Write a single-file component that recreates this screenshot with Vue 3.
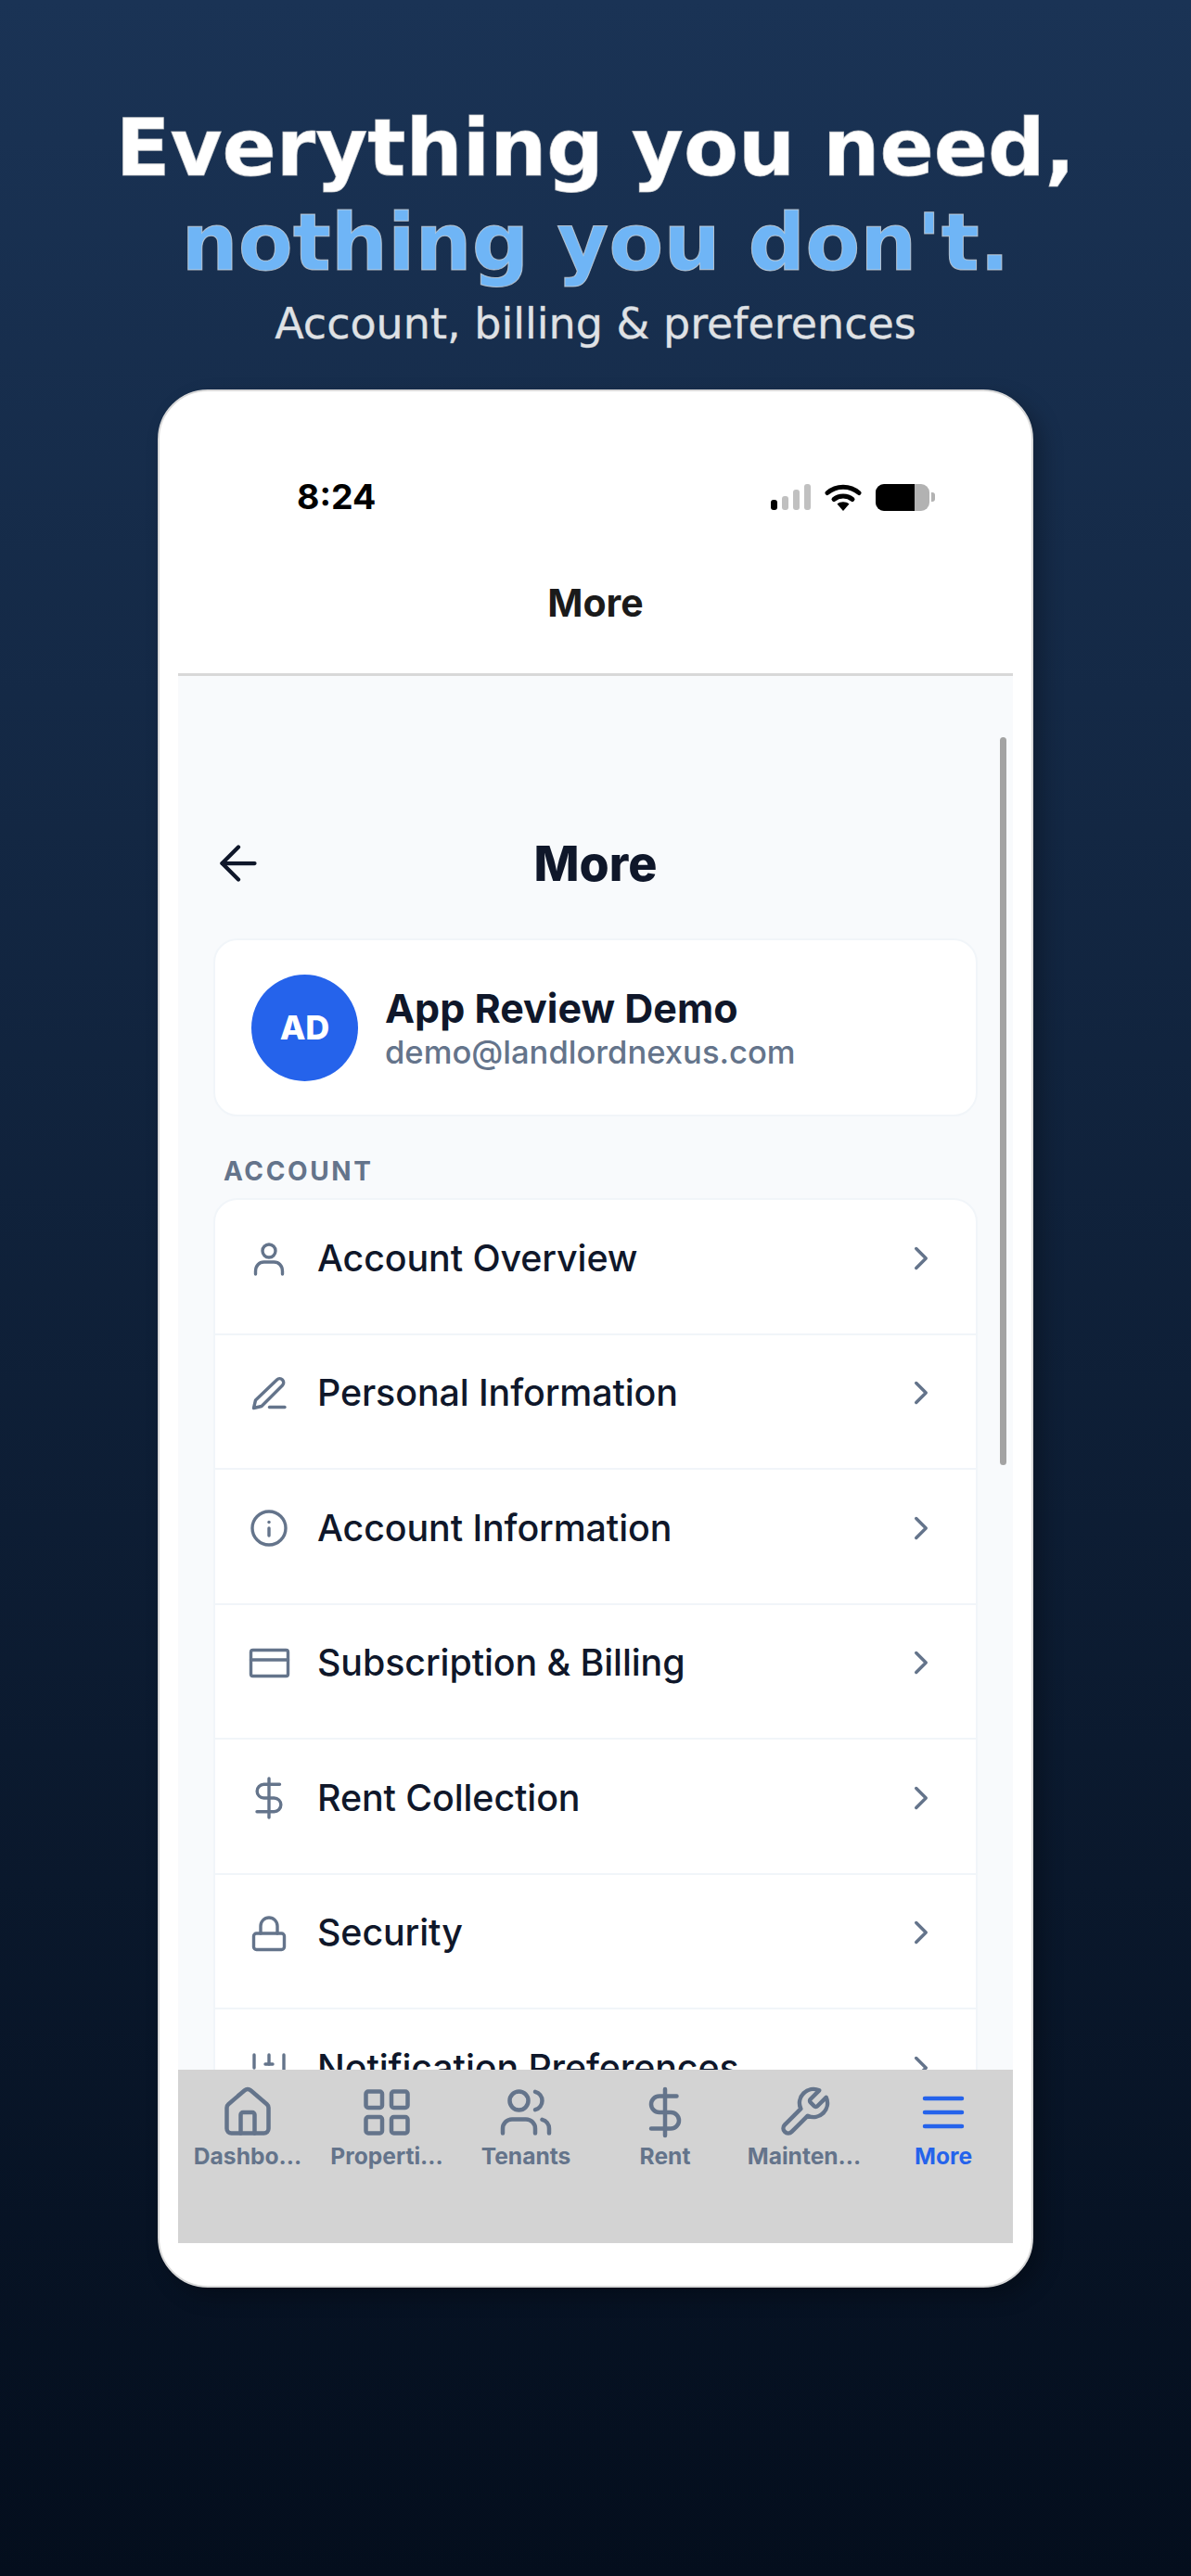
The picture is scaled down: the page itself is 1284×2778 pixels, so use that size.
<template>
  <div class="page">
    <header class="hero">
      <h1>Everything you need,<br /><span>nothing you don't.</span></h1>
      <p>Account, billing &amp; preferences</p>
    </header>

    <div class="phone">
      <div class="status">
        <span class="time">8:24</span>
        <div class="status-icons">
          <div class="signal">
            <i class="on"></i><i class="b2"></i><i class="b3"></i><i class="b4"></i>
          </div>
          <svg class="wifi" width="40" height="30" viewBox="0 0 40 30">
            <path d="M3 10.5C12.5 2 27.5 2 37 10.5" fill="none" stroke="#000" stroke-width="5" stroke-linecap="round" />
            <path d="M10 17.5c5.5-4.6 14.5-4.6 20 0" fill="none" stroke="#000" stroke-width="5" stroke-linecap="round" />
            <path d="M13.5 22.5c3.6-3 9.4-3 13 0L20 30z" fill="#000" />
          </svg>
          <div class="battery"><div class="level"></div></div>
          <div class="cap"></div>
        </div>
      </div>
      <div class="nav-title">More</div>

      <main class="scroll">
        <div class="scrollbar"></div>
        <div class="title-row">
          <svg class="back" width="60" height="60" viewBox="0 0 24 24" fill="none" stroke="#0f172a" stroke-width="1.7" stroke-linecap="round" stroke-linejoin="round">
            <path d="m12 19-7-7 7-7" /><path d="M19 12H5" />
          </svg>
          <h2>More</h2>
        </div>

        <section class="profile">
          <div class="avatar">AD</div>
          <div class="who">
            <div class="name">App Review Demo</div>
            <div class="email">demo@landlordnexus.com</div>
          </div>
        </section>

        <div class="section-label">ACCOUNT</div>
        <section class="list">
          <div v-for="row in rows" :key="row.label" class="row">
            <svg class="row-icon" width="56" height="56" viewBox="0 0 56 56" fill="none" stroke="#64748b" stroke-width="3.4" stroke-linecap="round" stroke-linejoin="round">
              <path v-for="d in row.icon" :key="d" :d="d" />
            </svg>
            <span class="row-label">{{ row.label }}</span>
            <svg class="chev" width="42" height="42" viewBox="0 0 24 24" fill="none" stroke="#64748b" stroke-width="2" stroke-linecap="round" stroke-linejoin="round">
              <path d="m9 18 6-6-6-6" />
            </svg>
          </div>
        </section>
      </main>

      <nav class="tabs">
        <div v-for="t in tabs" :key="t.label" class="tab" :class="{ active: t.active }">
          <svg width="60" height="60" viewBox="0 0 24 24" fill="none" stroke="currentColor" stroke-width="1.8" stroke-linecap="round" stroke-linejoin="round">
            <path v-for="d in t.icon" :key="d" :d="d" />
          </svg>
          <span>{{ t.label }}</span>
        </div>
      </nav>
    </div>
  </div>
</template>

<script setup>
const rows = [
  { label: 'Account Overview', icon: ['M35 20a7 7 0 1 1-14 0a7 7 0 0 1 14 0z', 'M13.5 45v-3c0-6 4-10 9-10h11c5 0 9 4 9 10v3'] },
  { label: 'Personal Information', icon: ['M36.5 14a4.2 4.2 0 0 1 6 6L20 42.5l-8.5 2 2-8.5z', 'M28.5 43.5h16.5'] },
  { label: 'Account Information', icon: ['M46 28a18 18 0 1 1-36 0a18 18 0 0 1 36 0z', 'M28 28v8', 'M28 21.5h.01'] },
  { label: 'Subscription & Billing', icon: ['M10.5 14.5h36a2 2 0 0 1 2 2v24a2 2 0 0 1-2 2h-36a2 2 0 0 1-2-2v-24a2 2 0 0 1 2-2z', 'M8.5 25h40'] },
  { label: 'Rent Collection', icon: ['M28 7v42', 'M39.5 13.3H22.5a7.35 7.35 0 0 0 0 14.7h11a7.35 7.35 0 0 1 0 14.7H15'] },
  { label: 'Security', icon: ['M14.5 29h27a3 3 0 0 1 3 3v11.5a3 3 0 0 1-3 3h-27a3 3 0 0 1-3-3V32a3 3 0 0 1 3-3z', 'M19 29v-8a9 9 0 0 1 18 0v8'] },
  { label: 'Notification Preferences', icon: ['M12 50V36', 'M12 28V14', 'M28 50V32', 'M28 24V14', 'M44 50V40', 'M44 32V14', 'M8 36h8', 'M24 24h8', 'M40 40h8'] },
]

const tabs = [
  { label: 'Dashbo...', icon: ['M15 21v-8a1 1 0 0 0-1-1h-4a1 1 0 0 0-1 1v8', 'M3 10a2 2 0 0 1 .709-1.528l7-5.999a2 2 0 0 1 2.582 0l7 5.999A2 2 0 0 1 21 10v9a2 2 0 0 1-2 2H5a2 2 0 0 1-2-2z'] },
  { label: 'Properti...', icon: ['M4 3h5a1 1 0 0 1 1 1v5a1 1 0 0 1-1 1H4a1 1 0 0 1-1-1V4a1 1 0 0 1 1-1z', 'M15 3h5a1 1 0 0 1 1 1v5a1 1 0 0 1-1 1h-5a1 1 0 0 1-1-1V4a1 1 0 0 1 1-1z', 'M15 14h5a1 1 0 0 1 1 1v5a1 1 0 0 1-1 1h-5a1 1 0 0 1-1-1v-5a1 1 0 0 1 1-1z', 'M4 14h5a1 1 0 0 1 1 1v5a1 1 0 0 1-1 1H4a1 1 0 0 1-1-1v-5a1 1 0 0 1 1-1z'] },
  { label: 'Tenants', icon: ['M16 21v-2a4 4 0 0 0-4-4H6a4 4 0 0 0-4 4v2', 'M13 7a4 4 0 1 1-8 0a4 4 0 0 1 8 0z', 'M16 3.128a4 4 0 0 1 0 7.744', 'M22 21v-2a4 4 0 0 0-3-3.87'] },
  { label: 'Rent', icon: ['M12 2v20', 'M17 5H9.5a3.5 3.5 0 0 0 0 7h5a3.5 3.5 0 0 1 0 7H6'] },
  { label: 'Mainten...', icon: ['M14.7 6.3a1 1 0 0 0 0 1.4l1.6 1.6a1 1 0 0 0 1.4 0l3.77-3.77a6 6 0 0 1-7.94 7.94l-6.91 6.91a2.12 2.12 0 0 1-3-3l6.91-6.91a6 6 0 0 1 7.94-7.94l-3.76 3.76z'] },
  { label: 'More', active: true, icon: ['M4 6h16', 'M4 12h16', 'M4 18h16'] },
]
</script>

<style>
html, body { margin: 0; padding: 0; background: #040f1e; }
</style>

<style scoped>
.page { width: 1284px; height: 2778px; overflow: hidden; box-sizing: border-box; padding-top: 108px; display: flex; flex-direction: column; align-items: center; background: linear-gradient(180deg, #1a3355 0%, #040e1d 100%); font-family: Inter, sans-serif; }

.hero { text-align: center; font-family: "DejaVu Sans", sans-serif; height: 312px; }
h1 { margin: 0; font-size: 86px; line-height: 102px; font-weight: 700; color: #fff; -webkit-text-stroke: 1px rgba(214, 214, 214, 0.75); }
h1 span { color: #6fb5f6; }
.hero p { margin: 9px 0 0; font-size: 46px; line-height: 56px; color: #dfe2e6; -webkit-text-stroke: 0.6px rgba(214, 214, 214, 0.7); }

.phone { width: 944px; height: 2047px; box-sizing: border-box; padding: 0 20px 46px; display: flex; flex-direction: column; background: #fff; border: 2px solid #d9d9d9; border-radius: 54px; box-shadow: 10px 10px 22px rgba(0, 0, 0, 0.26); }

.status { height: 168px; box-sizing: border-box; padding: 92px 84px 0 128px; display: flex; justify-content: space-between; align-items: flex-start; flex: none; }
.time { font-size: 37.5px; line-height: 44px; font-weight: 700; color: #000; }
.status-icons { display: flex; align-items: center; height: 44px; }
.signal { display: flex; align-items: flex-end; gap: 5px; height: 28px; margin-top: 0; }
.signal i { width: 7px; border-radius: 3px; background: #c0c0c0; }
.signal .on { height: 11px; background: #000; }
.signal .b2 { height: 15px; }
.signal .b3 { height: 22px; }
.signal .b4 { height: 28px; }
.wifi { margin-left: 15px; }
.battery { width: 58px; height: 29px; margin-left: 15px; border-radius: 9px; background: #b2b2b2; overflow: hidden; }
.level { width: 42px; height: 100%; background: #000; }
.cap { width: 4px; height: 10px; margin-left: 2px; border-radius: 0 3px 3px 0; background: #b2b2b2; }

.nav-title { flex: none; height: 139px; box-sizing: border-box; padding-bottom: 17px; display: flex; align-items: center; justify-content: center; font-size: 41px; font-weight: 700; color: #1a1a1a; border-bottom: 3px solid #d8d8d8; }

.scroll { flex: 1; min-height: 0; position: relative; overflow: hidden; background: #f8fafc; padding: 172px 38px 0; }
.scrollbar { position: absolute; top: 66px; right: 7px; width: 7px; height: 785px; border-radius: 4px; background: #a3a3a3; }

.title-row { position: relative; height: 60px; display: flex; align-items: center; justify-content: center; }
.back { position: absolute; left: -3px; top: 0; }
h2 { margin: 0; font-size: 52px; font-weight: 800; color: #0f172a; }

.profile { margin-top: 51px; height: 192px; box-sizing: border-box; padding: 0 39px; display: flex; align-items: center; gap: 29px; background: #fff; border: 2px solid #f1f5f9; border-radius: 26px; }
.avatar { width: 115px; height: 115px; border-radius: 50%; background: #2563eb; color: #fff; font-size: 36px; font-weight: 800; display: flex; align-items: center; justify-content: center; flex: none; }
.name { font-size: 43px; line-height: 50px; font-weight: 700; color: #0f172a; margin-top: 2px; }
.email { font-size: 34.6px; line-height: 44px; font-weight: 500; color: #64748b; }

.section-label { margin: 43px 0 0 11px; height: 45px; line-height: 32px; font-size: 28px; font-weight: 700; letter-spacing: 2.6px; color: #64748b; }

.list { background: #fff; border: 2px solid #f1f5f9; border-radius: 26px; overflow: hidden; }
.row { height: 145.5px; box-sizing: border-box; padding: 0 38px 18px 30px; display: flex; align-items: center; border-bottom: 2px solid #f1f5f9; }
.row-icon { flex: none; }
.row-label { flex: 1; margin-left: 24px; font-size: 39.4px; font-weight: 550; letter-spacing: -0.1px; color: #0f172a; }
.chev { flex: none; }

.tabs { flex: none; height: 187px; display: grid; grid-template-columns: repeat(6, 1fr); background: #d3d3d3; }
.tab { display: flex; flex-direction: column; align-items: center; padding-top: 16px; color: #64748b; }
.tab span { font-size: 24.6px; line-height: 34px; font-weight: 700; }
.tab.active { color: #2563eb; }
</style>
